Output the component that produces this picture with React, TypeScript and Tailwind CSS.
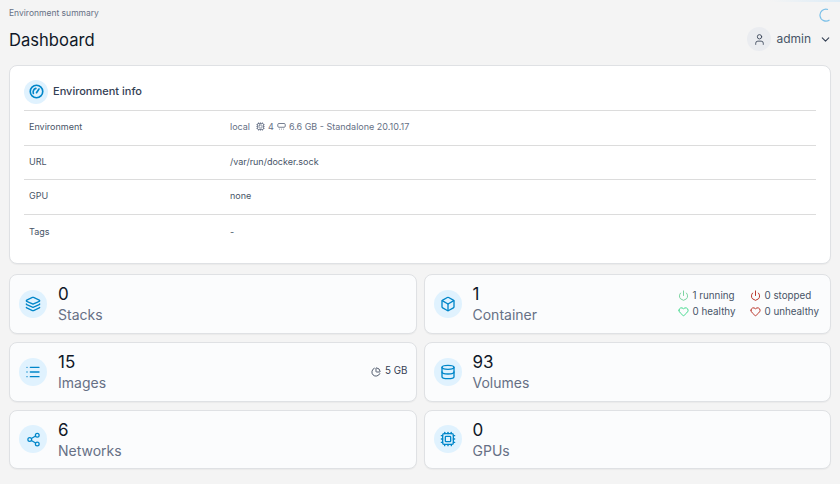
import { Box, ChevronDown, Cpu, Database, Heart, Layers, List, PieChart, Power, Share2, User } from "lucide-react"
import type { ReactNode } from "react"

const rows = [
    { label: "Environment", value: null },
    { label: "URL", value: "/var/run/docker.sock" },
    { label: "GPU", value: "none" },
    { label: "Tags", value: "-" },
]

function StatCard({ icon, value, label, children }: { icon: ReactNode; value: string; label: string; children?: ReactNode }) {
    return (
        <div className="flex items-center rounded-lg border border-[#dfe1e4] bg-[#fbfcfd] pl-[9px] pr-3 shadow-[0_1px_1px_rgba(0,0,0,0.04)]">
            <div className="flex h-7 w-7 shrink-0 items-center justify-center rounded-full bg-[#e0f2fe] text-[#0086c9]">
                {icon}
            </div>
            <div className="ml-[11px] flex flex-col">
                <span className="text-[17px] leading-[22px] text-[#101828]">{value}</span>
                <span className="mt-[1px] text-[14px] leading-[18px] text-[#667085]">{label}</span>
            </div>
            {children}
        </div>
    )
}

export default function App() {
    return (
        <div className="relative flex h-[484px] w-[840px] flex-col overflow-hidden bg-[#f4f4f4] font-['Inter',sans-serif]">
            <div className="absolute right-0 top-0 h-[2px] w-[70px] bg-gradient-to-r from-transparent to-[#dcecf7]" />
            <div className="flex h-[65px] shrink-0 justify-between pl-[9px] pr-2">
                <div>
                    <div className="mt-[8px] text-[8.5px] leading-[10px] text-[#667085]">Environment summary</div>
                    <h1 className="mt-[11px] text-[16.6px] leading-[22px] text-[#101828]">Dashboard</h1>
                </div>
                <div className="flex flex-col items-end">
                    <svg className="mt-[8px] mr-[1px] h-[14px] w-[14px] text-[#7cc0e8]" viewBox="0 0 14 14" fill="none" stroke="currentColor" strokeWidth="1.2">
                        <path d="M11 1.5 A6 6 0 1 0 12.5 12" />
                    </svg>
                    <div className="mt-[5px] flex items-center">
                        <div className="flex h-[24px] w-[24px] items-center justify-center rounded-full bg-[#eaecf0] text-[#344054]">
                            <User size={13} strokeWidth={1.6} />
                        </div>
                        <span className="ml-[5px] text-[12px] text-[#475467]">admin</span>
                        <ChevronDown size={13} className="ml-[8px] text-[#344054]" />
                    </div>
                </div>
            </div>

            <div className="mx-[9px] rounded-lg border border-[#dfe1e4] bg-white px-[14px] pb-[13px] shadow-[0_1px_1px_rgba(0,0,0,0.04)]">
                <div className="flex h-[45px] items-center border-b border-[#dcdcdc] pt-[7px]">
                    <div className="flex h-[24px] w-[24px] items-center justify-center rounded-full bg-[#e0f2fe] text-[#0086c9]">
                        <svg width="15" height="15" viewBox="0 0 24 24" fill="none" stroke="currentColor" strokeWidth="2.6" strokeLinecap="round">
                            <circle cx="12" cy="12" r="10" />
                            <path d="M12 14l4-6" />
                            <path d="M7 15a6 6 0 0 1 4-8" />
                        </svg>
                    </div>
                    <span className="ml-[5px] text-[11px] font-medium text-[#344054]">Environment info</span>
                </div>
                {rows.map((row, i) => (
                    <div key={row.label} className={`flex h-[34.7px] items-center pb-[2px] pl-[5px] text-[9px] ${i < 3 ? "border-b border-[#dcdcdc]" : ""}`}>
                        <span className="w-[201px] text-[#475467]">{row.label}</span>
                        {row.value ? (
                            <span className="text-[#475467]">{row.value}</span>
                        ) : (
                            <span className="flex items-center text-[#667085]">
                                local
                                <Cpu size={9} className="ml-[6px]" />
                                <span className="ml-[3px]">4</span>
                                <svg className="ml-[3px] h-[9px] w-[9px]" viewBox="0 0 12 12" fill="none" stroke="currentColor" strokeWidth="1.2">
                                    <rect x="1" y="2" width="10" height="5" rx="1.5" />
                                    <path d="M3 9.5h1M5.5 9.5h1M8 9.5h1" />
                                </svg>
                                <span className="ml-[3px]">6.6 GB - Standalone 20.10.17</span>
                            </span>
                        )}
                    </div>
                ))}
            </div>

            <div className="mx-[9px] mt-[10px] grid grid-cols-2 grid-rows-[60px_60px_59px] gap-x-[7px] gap-y-[8px]">
                <StatCard icon={<Layers size={16} />} value="0" label="Stacks" />
                <StatCard icon={<Box size={16} />} value="1" label="Container">
                    <div className="ml-auto -mr-[1px] grid grid-cols-[auto_auto] gap-x-[14px] gap-y-[3px] text-[9.8px] leading-[13px] text-[#475467]">
                        <span className="flex items-center gap-[4px]"><Power size={11} className="text-[#6fcf97]" />1 running</span>
                        <span className="flex items-center gap-[4px]"><Power size={11} className="text-[#b42318]" />0 stopped</span>
                        <span className="flex items-center gap-[4px]"><Heart size={11} className="text-[#32d583]" />0 healthy</span>
                        <span className="flex items-center gap-[4px]"><Heart size={11} className="text-[#b42318]" />0 unhealthy</span>
                    </div>
                </StatCard>
                <StatCard icon={<List size={16} />} value="15" label="Images">
                    <span className="ml-auto -mr-[4px] flex items-center gap-[4px] text-[9.8px] text-[#344054]">
                        <PieChart size={10} />5 GB
                    </span>
                </StatCard>
                <StatCard icon={<Database size={16} />} value="93" label="Volumes" />
                <StatCard icon={<Share2 size={15} />} value="6" label="Networks" />
                <StatCard icon={<Cpu size={16} />} value="0" label="GPUs" />
            </div>
        </div>
    )
}
